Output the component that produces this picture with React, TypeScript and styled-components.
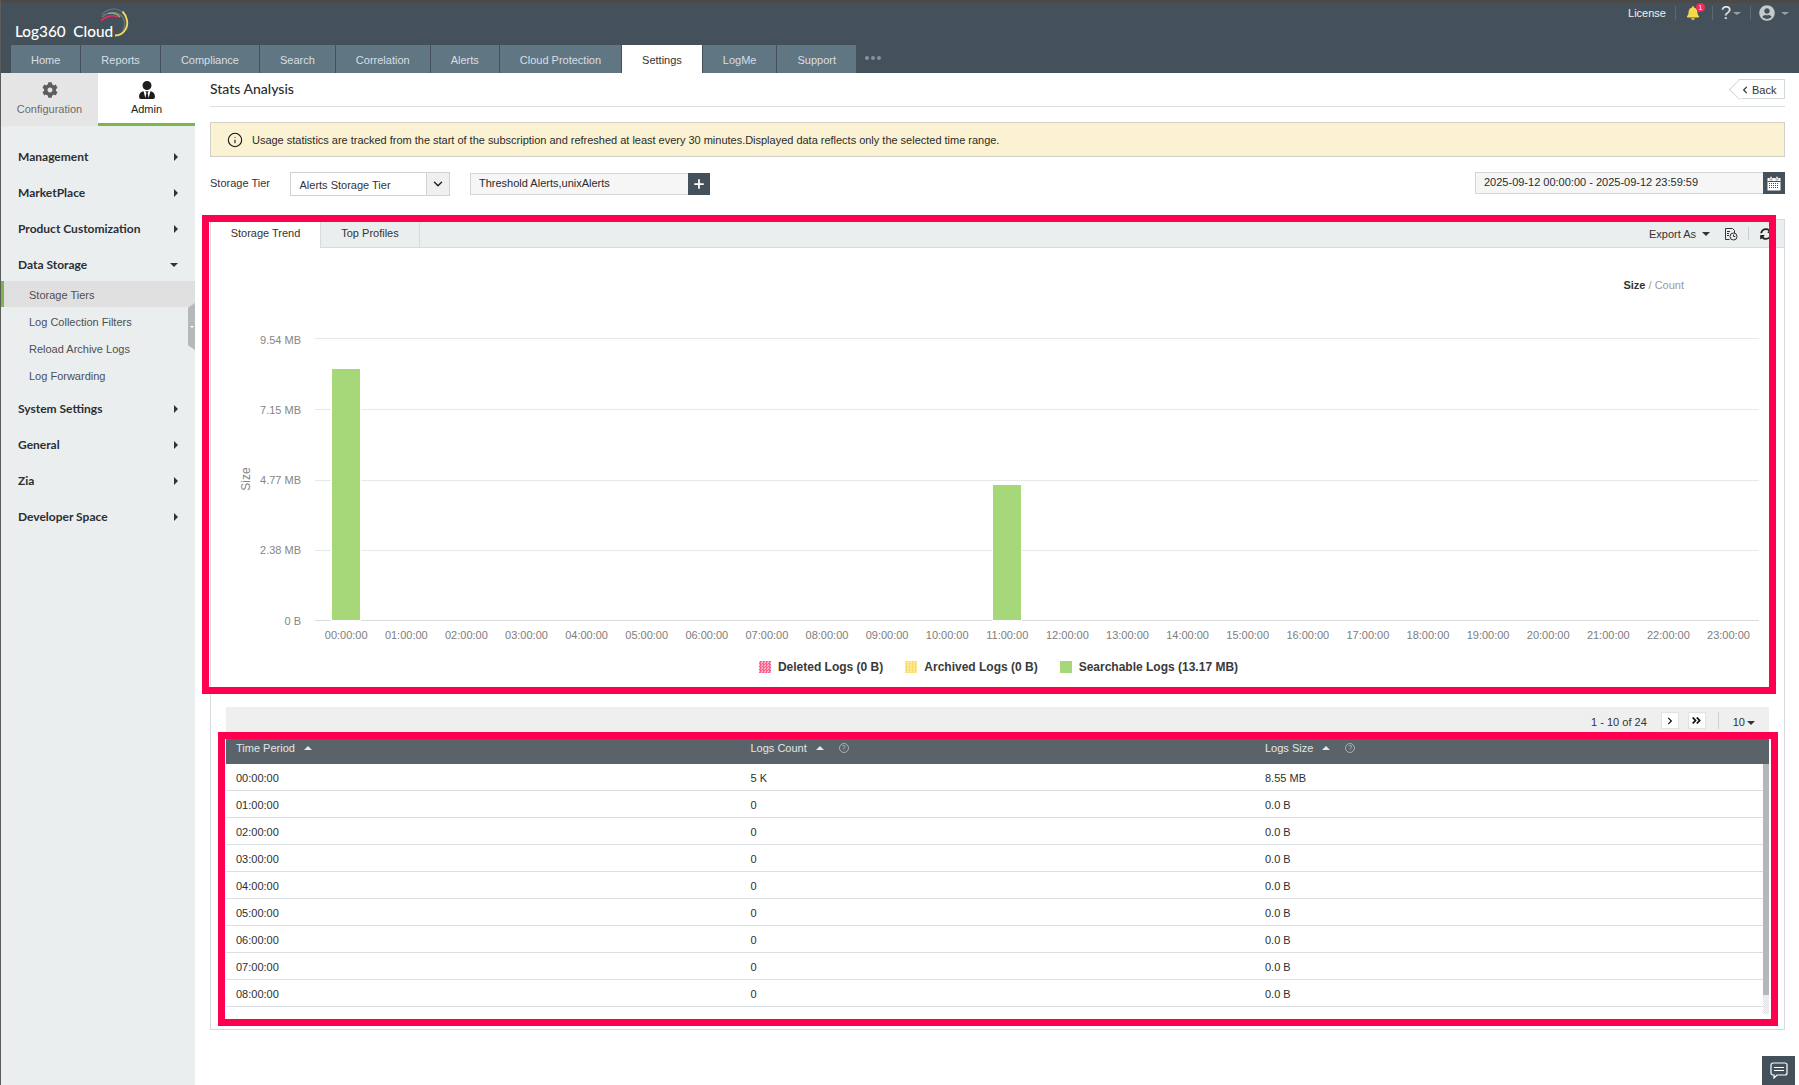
import React from "react";
import styled, { createGlobalStyle } from "styled-components";
import { FaCog, FaUserTie, FaBell, FaUserCircle, FaSyncAlt, FaChevronLeft, FaChevronRight, FaAngleDoubleRight } from "react-icons/fa";
import { Info, ChevronDown, Plus } from "lucide-react";

const Global = createGlobalStyle`
  html, body { margin: 0; padding: 0; background: #fff; }
  body { font-family: "Liberation Sans", Arial, sans-serif; font-size: 11px; color: #333; }
  * { box-sizing: border-box; }
`;

const Page = styled.div`
  position: relative;
  width: 1799px;
  height: 1085px;
  overflow: hidden;
  border-left: 1px solid #5c5c5c;
  display: flex;
  flex-direction: column;
`;

const Header = styled.header`
  height: 73px;
  flex: none;
  background: #45515a;
  border-top: 3px solid #4b4a49;
  display: flex;
  flex-direction: column;
`;

const HeaderTop = styled.div`
  height: 42px;
  display: flex;
  justify-content: space-between;
  padding: 0 10px 0 14px;
`;

const Logo = styled.div`
  display: flex;
  align-items: flex-start;
`;

const LogoText = styled.span`
  font-family: Lato, sans-serif;
  font-size: 15.3px;
  font-weight: 500;
  color: #fff;
  margin-top: 19px;
  line-height: 18px;
  white-space: pre;
`;

const LogoMark = styled.svg`
  width: 30px;
  height: 30px;
  margin: 5px 0 0 -13px;
`;

const HeaderTools = styled.div`
  display: flex;
  align-items: center;
  height: 20px;
  color: #fff;
`;

const LicenseLink = styled.span`
  font-size: 11px;
  color: #f0f3f4;
  margin-right: 9px;
`;

const HeaderSep = styled.span<{ $ml?: number; $mr?: number }>`
  width: 1px;
  height: 14px;
  background: #5c6972;
  margin-left: ${(p) => p.$ml ?? 0}px;
  margin-right: ${(p) => p.$mr ?? 0}px;
`;

const BellWrap = styled.span`
  position: relative;
  display: flex;
  color: #f7d84a;
  font-size: 14px;
`;

const Badge = styled.span`
  position: absolute;
  left: 10px;
  top: -3px;
  width: 9px;
  height: 9px;
  border-radius: 50%;
  background: #f4275e;
  color: #fff;
  font-size: 7px;
  line-height: 9px;
  text-align: center;
`;

const HelpMark = styled.span`
  font-size: 18px;
  color: #e6e9eb;
  line-height: 20px;
`;

const UserIcon = styled.span`
  display: flex;
  color: #c5cacd;
  font-size: 16px;
`;

const Caret = styled.i<{ $dir?: "up" | "down" | "right"; $w?: number; $h?: number; $color?: string; $ml?: number }>`
  display: inline-block;
  width: 0;
  height: 0;
  flex: none;
  margin-left: ${(p) => p.$ml ?? 0}px;
  ${(p) => {
    const w = p.$w ?? 3;
    const h = p.$h ?? 4;
    const c = p.$color ?? "#333";
    if (p.$dir === "right") return `border-top:${w}px solid transparent;border-bottom:${w}px solid transparent;border-left:${h}px solid ${c};`;
    if (p.$dir === "up") return `border-left:${w}px solid transparent;border-right:${w}px solid transparent;border-bottom:${h}px solid ${c};`;
    return `border-left:${w}px solid transparent;border-right:${w}px solid transparent;border-top:${h}px solid ${c};`;
  }}
`;

const MenuCaret = styled(Caret)`
  margin-top: 2px;
`;

const Nav = styled.nav`
  height: 28px;
  display: flex;
  gap: 1px;
  padding-left: 10px;
  align-items: stretch;
`;

const NavTab = styled.a<{ $active?: boolean }>`
  padding: 0 20px;
  line-height: 30px;
  font-size: 11px;
  background: ${(p) => (p.$active ? "#fff" : "#617683")};
  color: ${(p) => (p.$active ? "#333" : "#d8dfe3")};
`;

const NavMore = styled.span`
  display: flex;
  gap: 2px;
  align-items: center;
  margin: 0 0 2px 8px;
`;

const NavDot = styled.i`
  width: 4px;
  height: 4px;
  border-radius: 50%;
  background: #87939a;
`;

const Body = styled.div`
  flex: 1;
  display: flex;
  min-height: 0;
`;

const Sidebar = styled.aside`
  position: relative;
  width: 194px;
  flex: none;
  background: #ebeeef;
  display: flex;
  flex-direction: column;
`;

const SwitchRow = styled.div`
  display: flex;
  height: 53px;
  margin-bottom: 18px;
`;

const SwitchTab = styled.div<{ $active?: boolean }>`
  width: 97px;
  display: flex;
  flex-direction: column;
  align-items: center;
  padding-top: 8px;
  font-size: 11px;
  background: ${(p) => (p.$active ? "#fff" : "repeating-conic-gradient(#e2e2e2 0 25%, #e9e9e9 0 50%) 0 0/2px 2px")};
  color: ${(p) => (p.$active ? "#222" : "#6c6c6c")};
  border-bottom: 3px solid ${(p) => (p.$active ? "#7cb54a" : "transparent")};
`;

const SwitchIcon = styled.span<{ $active?: boolean }>`
  display: flex;
  height: 18px;
  align-items: center;
  font-size: ${(p) => (p.$active ? 18 : 16)}px;
  color: ${(p) => (p.$active ? "#1d1d1d" : "#5e5e5e")};
  margin-bottom: 4px;
`;

const MenuRow = styled.div<{ $tight?: boolean }>`
  height: 24px;
  margin-bottom: ${(p) => (p.$tight ? 5 : 12)}px;
  padding: 0 17px;
  display: flex;
  align-items: center;
  justify-content: space-between;
  font-family: Lato, sans-serif;
  font-weight: 700;
  font-size: 12px;
  color: #2b2f33;
`;

const SubList = styled.div`
  margin-bottom: 7px;
`;

const SubRow = styled.div<{ $active?: boolean }>`
  height: 27px;
  line-height: 29px;
  padding-left: ${(p) => (p.$active ? 25 : 28)}px;
  font-size: 11px;
  color: #4d4f52;
  ${(p) =>
    p.$active
      ? "background: repeating-conic-gradient(#dcdcdc 0 25%, #e3e3e3 0 50%) 0 0/2px 2px; border-left: 3px solid #7cb54a; height: 26px;margin-bottom:1px;"
      : ""}
`;

const CollapseHandle = styled.div`
  position: absolute;
  right: 0;
  top: 230px;
  width: 7px;
  height: 47px;
  background: #b4b9bc;
  clip-path: polygon(100% 0, 100% 100%, 0 90%, 0 10%);
  display: flex;
  align-items: center;
  justify-content: center;
`;

const Main = styled.main`
  flex: 1;
  min-width: 0;
  padding: 0 14px 0 15px;
  display: flex;
  flex-direction: column;
`;

const TitleRow = styled.div`
  height: 34px;
  border-bottom: 1px solid #dcdfe1;
  display: flex;
  align-items: center;
  justify-content: space-between;
`;

const Title = styled.h1`
  margin: 0 0 2px;
  font-family: Lato, sans-serif;
  font-weight: 500;
  font-size: 14px;
  color: #2a2d30;
`;

const BackButton = styled.button`
  position: relative;
  width: 47px;
  height: 20px;
  margin-bottom: 1px;
  padding: 1px 0 0 3px;
  border: 1px solid #d3d8db;
  border-left: none;
  background: #fff;
  font: 11px "Liberation Sans", sans-serif;
  color: #333;
  display: flex;
  align-items: center;
  gap: 3px;
  &::before {
    content: "";
    position: absolute;
    left: -6px;
    top: 2px;
    width: 14px;
    height: 14px;
    border-left: 1px solid #d3d8db;
    border-bottom: 1px solid #d3d8db;
    transform: rotate(45deg);
    background: #fff;
  }
  & > * {
    position: relative;
  }
`;

const InfoBar = styled.div`
  margin-top: 15px;
  height: 35px;
  background: #fbf2d3;
  border: 1px solid #d2d0c6;
  display: flex;
  align-items: center;
  padding-left: 16px;
  gap: 9px;
  color: #2b2b2b;
  letter-spacing: -0.014px;
`;

const FilterRow = styled.div`
  margin-top: 15px;
  height: 24px;
  display: flex;
  align-items: flex-start;
`;

const FieldLabel = styled.label`
  width: 80px;
  line-height: 22px;
  color: #333;
`;

const SelectBox = styled.div`
  width: 160px;
  height: 24px;
  border: 1px solid #cfd3d6;
  display: flex;
  justify-content: space-between;
  background: #fff;
  margin-right: 20px;
`;

const SelectValue = styled.span`
  padding-left: 8.5px;
  line-height: 25px;
`;

const SelectArrow = styled.span`
  width: 23px;
  border-left: 1px solid #cfd3d6;
  background: repeating-conic-gradient(#ececec 0 25%, #f3f3f3 0 50%) 0 0/2px 2px;
  display: flex;
  align-items: center;
  justify-content: center;
  color: #222;
`;

const InputGroup = styled.div<{ $push?: boolean; $w: number; $drop?: number }>`
  width: ${(p) => p.$w}px;
  height: 22px;
  margin-top: ${(p) => p.$drop ?? 0}px;
  margin-left: ${(p) => (p.$push ? "auto" : "0")};
  display: flex;
`;

const InputValue = styled.div`
  flex: 1;
  border: 1px solid #d3d6d8;
  border-right: none;
  background: #f6f6f6;
  padding-left: 8px;
  line-height: 19px;
  color: #2b2b2b;
`;

const SquareAction = styled.span`
  width: 22px;
  flex: none;
  background: #45515a;
  color: #fff;
  display: flex;
  align-items: center;
  justify-content: center;
`;

const Card = styled.section`
  margin-top: 23px;
  border: 1px solid #d5dbdf;
  padding-bottom: 9px;
`;

const TabStrip = styled.div`
  height: 28px;
  display: flex;
  align-items: stretch;
  background: #ebeeef;
  border-bottom: 1px solid #d5dbdf;
`;

const CardTab = styled.div<{ $active?: boolean; $w: number }>`
  width: ${(p) => p.$w}px;
  height: 28px;
  line-height: 27px;
  text-align: center;
  color: #333;
  background: ${(p) => (p.$active ? "#fff" : "transparent")};
  border-right: 1px solid #d5dbdf;
`;

const StripTools = styled.div`
  margin-left: auto;
  display: flex;
  align-items: center;
  padding-right: 12px;
  color: #333;
`;

const ToolIcon = styled.svg`
  margin-left: 14px;
`;

const ToolSep = styled.span`
  width: 1px;
  height: 13px;
  background: #c9ced1;
  margin: 0 11px 0 10px;
`;

const ChartToggle = styled.div`
  height: 62px;
  padding: 27px 100px 0 0;
  line-height: 20px;
  text-align: right;
  color: #9a9a9a;
  font-size: 11px;
`;

const ToggleOn = styled.b`
  color: #333;
`;

const ChartSvg = styled.svg`
  display: block;
  width: 1573px;
  height: 340px;
  font-family: "Liberation Sans", sans-serif;
  font-size: 11px;
`;

const Legend = styled.div`
  height: 34px;
  margin-bottom: 23px;
  padding-left: 2px;
  display: flex;
  justify-content: center;
  align-items: center;
  gap: 22px;
`;

const LegendItem = styled.span`
  display: flex;
  align-items: center;
  gap: 7px;
  font-size: 12px;
  font-weight: 700;
  color: #3a3a3a;
`;

const LegendSwatch = styled.i<{ $a: string; $b: string }>`
  width: 12px;
  height: 12px;
  background: repeating-conic-gradient(${(p) => p.$a} 0 25%, ${(p) => p.$b} 0 50%) 0 0/3px 3px;
`;

const Pager = styled.div`
  margin: 0 15px;
  height: 25px;
  background: #efefef;
  padding: 5px 14px 0 0;
  display: flex;
  justify-content: flex-end;
  align-items: flex-start;
`;

const PagerText = styled.span<{ $mr?: number }>`
  line-height: 17px;
  margin: 2px ${(p) => p.$mr ?? 0}px 0 0;
  color: #333;
  display: flex;
  align-items: center;
`;

const PagerButton = styled.span`
  width: 18px;
  height: 17px;
  background: #fff;
  border: 1px solid #e2e2e2;
  display: flex;
  align-items: center;
  justify-content: center;
  margin-right: 9px;
  color: #111;
`;

const PagerSep = styled.span`
  width: 1px;
  height: 17px;
  background: #d2d2d2;
  margin: 0 14px 0 3px;
`;

const TableWrap = styled.div`
  margin: 0 15px;
`;

const HeadRow = styled.div`
  height: 32px;
  background: #596369;
  display: grid;
  grid-template-columns: 514.5px 514.5px 1fr;
  color: #e3e7e9;
`;

const HeadCell = styled.div`
  padding: 8px 0 0 10px;
  line-height: 16px;
  display: flex;
  align-items: center;
  height: 24px;
`;

const HelpCircle = styled.span`
  width: 10px;
  height: 10px;
  border: 1px solid #aab1b5;
  border-radius: 50%;
  margin-left: 15px;
  font-size: 7px;
  line-height: 8px;
  text-align: center;
  color: #c7ccd0;
`;

const TableBody = styled.div`
  height: 256px;
  display: flex;
  align-items: flex-start;
`;

const Rows = styled.div`
  flex: 1;
`;

const Row = styled.div`
  height: 27px;
  display: grid;
  grid-template-columns: 514.5px 514.5px 1fr;
  border-bottom: 1px solid #dcdfe1;
  line-height: 28px;
  color: #2e2e2e;
`;

const Cell = styled.div`
  padding-left: 10px;
`;

const Scrollbar = styled.div`
  width: 6px;
  height: 250px;
  background: repeating-conic-gradient(#e4e4e4 0 25%, #f2f2f2 0 50%) 0 0/2px 2px;
`;

const ScrollThumb = styled.div`
  height: 231px;
  background: #b3b7b9;
`;

const RedFrame = styled.div<{ $x: number; $y: number; $w: number; $h: number }>`
  position: absolute;
  left: ${(p) => p.$x - 1}px;
  top: ${(p) => p.$y}px;
  width: ${(p) => p.$w}px;
  height: ${(p) => p.$h}px;
  border: 7px solid #ff0050;
  pointer-events: none;
`;

const ChatButton = styled.div`
  position: absolute;
  right: 4px;
  bottom: 0;
  width: 33px;
  height: 29px;
  background: #45515a;
  display: flex;
  align-items: center;
  justify-content: center;
`;

const navItems = ["Home", "Reports", "Compliance", "Search", "Correlation", "Alerts", "Cloud Protection", "Settings", "LogMe", "Support"];
const hours = Array.from({ length: 24 }, (_, i) => `${String(i).padStart(2, "0")}:00:00`);
const yTicks: [string, number, number][] = [
  ["9.54 MB", 338, 344],
  ["7.15 MB", 409, 414],
  ["4.77 MB", 480, 484],
  ["2.38 MB", 550, 554],
];
const tableRows = hours.slice(0, 9).map((h, i) => ({
  time: h,
  count: i === 0 ? "5 K" : "0",
  size: i === 0 ? "8.55 MB" : "0.0 B",
}));

function Menu({ label, open, tight }: { label: string; open?: boolean; tight?: boolean }) {
  return (
    <MenuRow $tight={tight}>
      {label}
      {open ? <MenuCaret $dir="down" $w={4} $h={4} $color="#333" /> : <MenuCaret $dir="right" $w={4} $h={4} $color="#333" />}
    </MenuRow>
  );
}

export default function App() {
  return (
    <>
      <Global />
      <Page>
        <Header>
          <HeaderTop>
            <Logo>
              <LogoText>{"Log360  Cloud"}</LogoText>
              <LogoMark viewBox="100 8 30 30" fill="none">
                <path d="M102 14.5C106 9.5 114 7.5 120 10.5C126 14 128 22 125 29" stroke="#5f6b72" strokeWidth="1.4" />
                <path d="M102 17C107 12 115 11 120 14.5C125 18 126 25 123 31" stroke="#6d7a80" strokeWidth="1.2" />
                <path d="M108 13.5C112 12.5 117 13.5 120 17" stroke="#8fbf6a" strokeWidth="1.2" />
                <path d="M101 21C105 16 112 14.5 118 17" stroke="#f0285f" strokeWidth="1.5" />
                <path d="M122.5 11.5C127 16 129 24 125.5 29.5C123 33.5 119 35.5 115 35.5" stroke="#f3dc55" strokeWidth="1.8" />
              </LogoMark>
            </Logo>
            <HeaderTools>
              <LicenseLink>License</LicenseLink>
              <HeaderSep $mr={10} />
              <BellWrap>
                <FaBell />
                <Badge>1</Badge>
              </BellWrap>
              <HeaderSep $ml={12} $mr={8} />
              <HelpMark>?</HelpMark>
              <Caret $dir="down" $w={4} $h={3} $color="#9aa3a8" $ml={2} />
              <HeaderSep $ml={9} $mr={8} />
              <UserIcon>
                <FaUserCircle />
              </UserIcon>
              <Caret $dir="down" $w={4} $h={3} $color="#9aa3a8" $ml={6} />
            </HeaderTools>
          </HeaderTop>
          <Nav>
            {navItems.map((n) => (
              <NavTab key={n} $active={n === "Settings"}>
                {n}
              </NavTab>
            ))}
            <NavMore>
              <NavDot />
              <NavDot />
              <NavDot />
            </NavMore>
          </Nav>
        </Header>
        <Body>
          <Sidebar>
            <SwitchRow>
              <SwitchTab>
                <SwitchIcon>
                  <FaCog />
                </SwitchIcon>
                Configuration
              </SwitchTab>
              <SwitchTab $active>
                <SwitchIcon $active>
                  <FaUserTie />
                </SwitchIcon>
                Admin
              </SwitchTab>
            </SwitchRow>
            <Menu label="Management" />
            <Menu label="MarketPlace" />
            <Menu label="Product Customization" />
            <Menu label="Data Storage" open tight />
            <SubList>
              <SubRow $active>Storage Tiers</SubRow>
              <SubRow>Log Collection Filters</SubRow>
              <SubRow>Reload Archive Logs</SubRow>
              <SubRow>Log Forwarding</SubRow>
            </SubList>
            <Menu label="System Settings" />
            <Menu label="General" />
            <Menu label="Zia" />
            <Menu label="Developer Space" />
            <CollapseHandle>
              <Caret $dir="down" $w={2} $h={2} $color="#fff" />
            </CollapseHandle>
          </Sidebar>
          <Main>
            <TitleRow>
              <Title>Stats Analysis</Title>
              <BackButton>
                <FaChevronLeft size={8} />
                <span>Back</span>
              </BackButton>
            </TitleRow>
            <InfoBar>
              <Info size={16} strokeWidth={1.6} color="#111" />
              <span>Usage statistics are tracked from the start of the subscription and refreshed at least every 30 minutes.Displayed data reflects only the selected time range.</span>
            </InfoBar>
            <FilterRow>
              <FieldLabel>Storage Tier</FieldLabel>
              <SelectBox>
                <SelectValue>Alerts Storage Tier</SelectValue>
                <SelectArrow>
                  <ChevronDown size={14} strokeWidth={2.5} />
                </SelectArrow>
              </SelectBox>
              <InputGroup $w={240} $drop={1}>
                <InputValue>Threshold Alerts,unixAlerts</InputValue>
                <SquareAction>
                  <Plus size={14} strokeWidth={3} />
                </SquareAction>
              </InputGroup>
              <InputGroup $w={310} $push>
                <InputValue>2025-09-12 00:00:00 - 2025-09-12 23:59:59</InputValue>
                <SquareAction>
                  <svg width="14" height="15" viewBox="0 0 14 15" fill="none">
                    <rect x="0.5" y="2" width="13" height="12.5" fill="#fff" />
                    <rect x="3" y="0.5" width="2" height="3.5" fill="#fff" stroke="#45515a" strokeWidth="0.5" />
                    <rect x="9" y="0.5" width="2" height="3.5" fill="#fff" stroke="#45515a" strokeWidth="0.5" />
                    <path d="M0.5 5.5h13" stroke="#45515a" />
                    <path d="M2 7.5h10M2 9.5h10M2 11.5h10" stroke="#45515a" strokeDasharray="1 1" />
                  </svg>
                </SquareAction>
              </InputGroup>
            </FilterRow>
            <Card>
              <TabStrip>
                <CardTab $active $w={110}>Storage Trend</CardTab>
                <CardTab $w={99}>Top Profiles</CardTab>
                <StripTools>
                  Export As
                  <Caret $dir="down" $w={4} $h={4} $color="#333" $ml={6} />
                  <ToolIcon width="14" height="14" viewBox="0 0 14 14" fill="none" stroke="#333" strokeWidth="1">
                    <path d="M5.5 12.5H1.5V1.5H8.5L10.5 3.5V6" />
                    <path d="M3 4.5h3M3 6.5h2M3 8.5h2" />
                    <circle cx="9.5" cy="9.5" r="3.5" />
                    <path d="M9.5 7.5v2h1.8" />
                  </ToolIcon>
                  <ToolSep />
                  <FaSyncAlt size={12} color="#222" />
                </StripTools>
              </TabStrip>
              <ChartToggle>
                <ToggleOn>Size</ToggleOn> / Count
              </ChartToggle>
              <ChartSvg viewBox="211 310 1573 340">
                {yTicks.map(([t, y, ty]) => (
                  <g key={t}>
                    <line x1="315" x2="1759" y1={y + 0.5} y2={y + 0.5} stroke="#e6e9ec" />
                    <text x="301" y={ty} textAnchor="end" fill="#858585">{t}</text>
                  </g>
                ))}
                <line x1="315" x2="1759" y1="620.5" y2="620.5" stroke="#d5dbdf" />
                <text x="301" y="625" textAnchor="end" fill="#858585">0 B</text>
                <text transform="translate(250 479) rotate(-90)" textAnchor="middle" fill="#858585" fontSize="12">Size</text>
                <rect x="331.5" y="368.5" width="29" height="252" fill="#a6d87a" stroke="#fff" />
                <rect x="992.5" y="484.5" width="29" height="136" fill="#a6d87a" stroke="#fff" />
                {hours.map((h, i) => (
                  <text key={h} x={346.2 + i * 60.1} y="639" textAnchor="middle" fill="#7d7d7d">{h}</text>
                ))}
              </ChartSvg>
              <Legend>
                <LegendItem>
                  <LegendSwatch $a="#ff5f8a" $b="#ffb0c6" />
                  Deleted Logs (0 B)
                </LegendItem>
                <LegendItem>
                  <LegendSwatch $a="#fbdc62" $b="#fdeca8" />
                  Archived Logs (0 B)
                </LegendItem>
                <LegendItem>
                  <LegendSwatch $a="#a6d87a" $b="#a6d87a" />
                  Searchable Logs (13.17 MB)
                </LegendItem>
              </Legend>
              <Pager>
                <PagerText $mr={14}>1 - 10 of 24</PagerText>
                <PagerButton>
                  <FaChevronRight size={8} />
                </PagerButton>
                <PagerButton>
                  <FaAngleDoubleRight size={11} />
                </PagerButton>
                <PagerSep />
                <PagerText>
                  10
                  <Caret $dir="down" $w={4} $h={4} $color="#333" $ml={2} />
                </PagerText>
              </Pager>
              <TableWrap>
                <HeadRow>
                  <HeadCell>
                    Time Period
                    <Caret $dir="up" $w={4} $h={4} $color="#e3e7e9" $ml={9} />
                  </HeadCell>
                  <HeadCell>
                    Logs Count
                    <Caret $dir="up" $w={4} $h={4} $color="#e3e7e9" $ml={9} />
                    <HelpCircle>?</HelpCircle>
                  </HeadCell>
                  <HeadCell>
                    Logs Size
                    <Caret $dir="up" $w={4} $h={4} $color="#e3e7e9" $ml={9} />
                    <HelpCircle>?</HelpCircle>
                  </HeadCell>
                </HeadRow>
                <TableBody>
                  <Rows>
                    {tableRows.map((r) => (
                      <Row key={r.time}>
                        <Cell>{r.time}</Cell>
                        <Cell>{r.count}</Cell>
                        <Cell>{r.size}</Cell>
                      </Row>
                    ))}
                  </Rows>
                  <Scrollbar>
                    <ScrollThumb />
                  </Scrollbar>
                </TableBody>
              </TableWrap>
            </Card>
          </Main>
        </Body>
        <RedFrame $x={202} $y={215} $w={1574} $h={479} />
        <RedFrame $x={218} $y={732} $w={1560} $h={294} />
        <ChatButton>
          <svg width="18" height="17" viewBox="0 0 18 17" fill="none" stroke="#fff" strokeWidth="1.2">
            <path d="M3 1h12a2 2 0 0 1 2 2v8a2 2 0 0 1-2 2H7l-3 3v-3H3a2 2 0 0 1-2-2V3a2 2 0 0 1 2-2z" />
            <path d="M4 5.5h10M4 8.5h10" />
          </svg>
        </ChatButton>
      </Page>
    </>
  );
}
